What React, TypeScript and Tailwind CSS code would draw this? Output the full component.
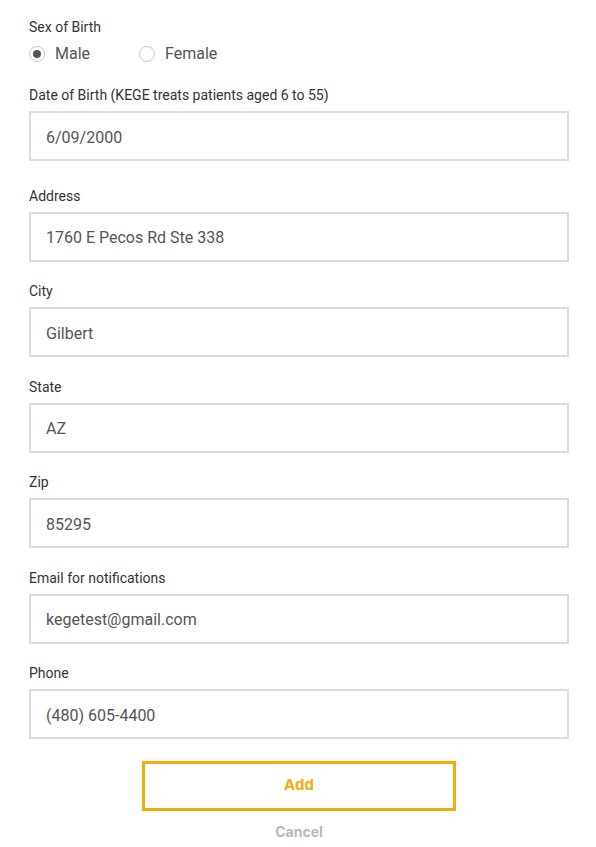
import React from 'react'

const fields = [
  { label: 'Address', value: '1760 E Pecos Rd Ste 338' },
  { label: 'City', value: 'Gilbert' },
  { label: 'State', value: 'AZ' },
  { label: 'Zip', value: '85295' },
  { label: 'Email for notifications', value: 'kegetest@gmail.com' },
  { label: 'Phone', value: '(480) 605-4400' },
]

const Radio = ({ checked, label }: { checked?: boolean; label: string }) => (
  <label className="flex items-center gap-[10px]">
    <span className="w-[16px] h-[16px] rounded-full border border-[#c8c8c8] bg-white flex items-center justify-center">
      {checked && <span className="w-[8px] h-[8px] rounded-full bg-[#555]" />}
    </span>
    <span className="text-[16px] leading-[20px] text-[#555]">{label}</span>
  </label>
)

const Field = ({ label, value }: { label: string; value: string }) => (
  <div className="mb-[21.5px]">
    <div className="text-[14px] leading-[16px] text-[#333] mb-[8px]">{label}</div>
    <div className="h-[50px] border-2 border-[#dcdcdc] flex items-center px-[15px] pt-[3px] text-[16px] text-[#555]">
      {value}
    </div>
  </div>
)

const App = () => {
  return (
    <div
      className="bg-white min-h-[847px] pt-[19px]"
      style={{ fontFamily: 'Roboto, "Liberation Sans", sans-serif' }}
    >
      <div className="w-[540px] ml-[29px]">
        <div className="text-[14px] leading-[16px] text-[#333] mb-[8px]">Sex of Birth</div>
        <div className="flex items-center gap-[49px] h-[20px] pt-[1px]">
          <Radio checked label="Male" />
          <Radio label="Female" />
        </div>

        <div className="mt-[24px]">
          <div className="text-[14px] leading-[16px] text-[#333] mb-[8px]">
            Date of Birth (KEGE treats patients aged 6 to 55)
          </div>
          <div className="h-[50px] border-2 border-[#dcdcdc] flex items-center px-[15px] pt-[3px] text-[16px] text-[#555] mb-[26.5px]">
            6/09/2000
          </div>
        </div>

        {fields.map((f) => (
          <Field key={f.label} label={f.label} value={f.value} />
        ))}

        <div className="flex flex-col items-center">
          <button
            className="w-[314px] h-[50px] border-[3px] border-[#f7ab0a] text-[#f7ab0a] text-[15px] font-bold"
            style={{ fontFamily: 'Inter, sans-serif' }}
          >
            Add
          </button>
          <div
            className="mt-[10px] text-[14px] font-bold text-[#b8b8b8]"
            style={{ fontFamily: 'Inter, sans-serif' }}
          >
            Cancel
          </div>
        </div>
      </div>
    </div>
  )
}

export default App
